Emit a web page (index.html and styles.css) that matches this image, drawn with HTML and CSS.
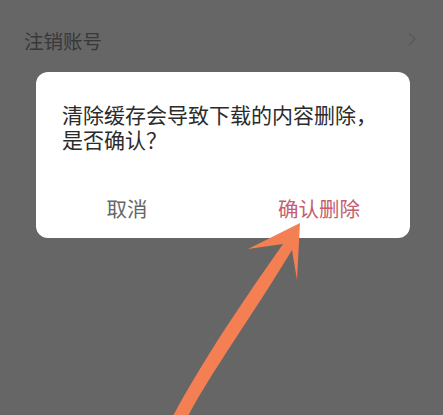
FILE: index.html
```html
<!DOCTYPE html>
<html lang="zh-CN">
<head>
<meta charset="UTF-8">
<title>设置</title>
<link rel="stylesheet" href="styles.css">
</head>
<body>
<div class="lista">
    <div class="item">
        <span>注销账号</span>
        <svg class="seta" width="10" height="16" viewBox="0 0 10 16"><path d="M2 2 L8 8 L2 14" fill="none" stroke="#575757" stroke-width="1.3"/></svg>
    </div>
</div>

<div class="dialogo">
    <p class="mensagem">清除缓存会导致下载的内容删除，<br>是否确认？</p>
    <div class="botoes">
        <button class="cancelar">取消</button>
        <button class="confirmar">确认删除</button>
    </div>
</div>

<!-- seta laranja apontando para o botão de confirmar -->
<svg class="indicador" width="443" height="415" viewBox="0 0 443 415">
    <path d="M172 418 L187 418 C211 372 251 318 292 250 L297 280 L300 223 L248 249 L283 244 C240 305 200 365 172 418 Z" fill="#f47f52"/>
</svg>
</body>
</html>
```

FILE: styles.css
```css
body { margin: 0; padding: 0; background: #666; font-family: "Noto Sans CJK SC", "Noto Sans", sans-serif; width: 443px; height: 415px; overflow: hidden; position: relative; }
.lista { padding-top: 20px; }
.item { display: flex; align-items: center; justify-content: space-between; height: 40px; padding: 0 26px 0 24px; font-size: 19.5px; color: #383838; }
.seta { margin-top: -2px; }
.dialogo { position: absolute; left: 36px; top: 72px; width: 374px; height: 166px; background: #fff; border-radius: 12px; }
.mensagem { margin: 0; padding: 30px 20px 0 26px; font-size: 21px; line-height: 25px; color: #2b2b2b; }
.botoes { display: flex; margin-top: 27px; }
.botoes button { flex: 1; height: 58px; border: none; background: none; font-family: inherit; font-size: 20.5px; cursor: pointer; }
.cancelar { color: #666; padding-right: 12px; }
.confirmar { color: #c4606c; padding-left: 10px; }
.indicador { position: absolute; left: 0; top: 0; }
```
